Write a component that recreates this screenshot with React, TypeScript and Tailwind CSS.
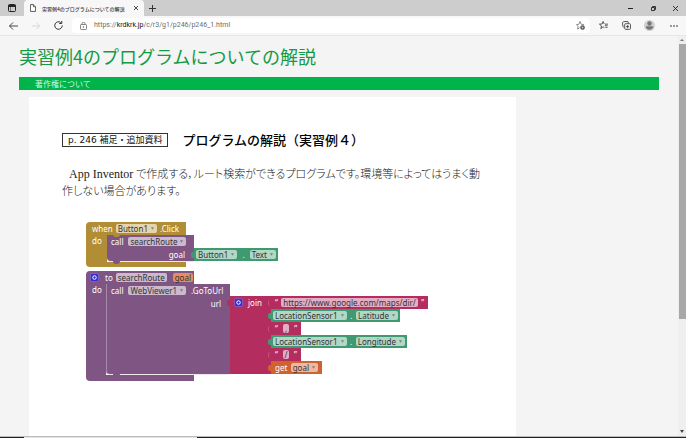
import type { ReactNode } from 'react';

const DOC_TITLE = '実習例4のプログラムについての解説';

/* ---------- browser chrome ---------- */

function TabBar() {
  return (
    <div className="flex h-4 items-stretch bg-[#cdcdcd] text-[#333]">
      <button aria-label="タブ操作メニュー" className="flex w-6 items-center justify-center">
        <svg viewBox="0 0 16 16" className="size-2" fill="none" stroke="#222" strokeWidth="2">
          <rect x="1" y="1" width="14" height="14" rx="2" />
          <path d="M1 4h14" strokeWidth="4" />
          <path d="M5 5v10" strokeWidth="1" />
        </svg>
      </button>
      <div className="flex w-30 items-center rounded-t-sm bg-[#f7f7f7] pr-1 pl-1.5">
        <svg viewBox="0 0 14 18" className="h-2 w-1.5" fill="#fff" stroke="#444" strokeWidth="2">
          <path d="M1 1h7l5 5v11H1z" />
          <path d="M8 1v5h5" />
        </svg>
        <span className="ml-1.5 flex-1 text-[5px] leading-none font-medium whitespace-nowrap">{DOC_TITLE}</span>
        <button aria-label="タブを閉じる" className="flex size-2 items-center justify-center">
          <svg viewBox="0 0 10 10" className="size-1" stroke="#222" strokeWidth="2">
            <path d="M0 0l10 10M10 0L0 10" />
          </svg>
        </button>
      </div>
      <button aria-label="新しいタブ" className="flex w-4 items-center justify-center">
        <svg viewBox="0 0 14 14" className="size-[7px]" stroke="#333" strokeWidth="2">
          <path d="M7 0v14M0 7h14" />
        </svg>
      </button>
      <div className="flex-1" />
      <button aria-label="最小化" className="flex w-[23px] items-center justify-center">
        <svg viewBox="0 0 10 10" className="size-[5px]" stroke="#222" strokeWidth="2">
          <path d="M0 5h10" />
        </svg>
      </button>
      <button aria-label="元に戻す" className="flex w-[23px] items-center justify-center">
        <svg viewBox="0 0 10 10" className="size-[5px]" fill="none" stroke="#222" strokeWidth="1.8">
          <path d="M1 3h6v6H1zM3 3V1h6v6H7" />
        </svg>
      </button>
      <button aria-label="閉じる" className="flex w-[21px] items-center justify-center">
        <svg viewBox="0 0 10 10" className="size-[5px]" stroke="#222" strokeWidth="1.8">
          <path d="M0 0l10 10M10 0L0 10" />
        </svg>
      </button>
    </div>
  );
}

function Toolbar() {
  return (
    <div className="flex h-5 items-center border-b border-[#e6e6e6] bg-[#f7f7f7]">
      <button aria-label="戻る" className="flex w-[27px] items-center justify-center">
        <svg viewBox="0 0 18 16" className="h-2 w-[9px]" fill="none" stroke="#333" strokeWidth="1.8">
          <path d="M18 8H1M8 1L1 8l7 7" />
        </svg>
      </button>
      <button aria-label="進む" disabled className="flex w-[18px] items-center justify-center">
        <svg viewBox="0 0 18 16" className="h-2 w-2" fill="none" stroke="#d0d0d0" strokeWidth="1.8">
          <path d="M0 8h17M10 1l7 7-7 7" />
        </svg>
      </button>
      <button aria-label="更新" className="flex w-[27px] items-center justify-center">
        <svg viewBox="0 0 18 18" className="size-[9px]" fill="none" stroke="#333" strokeWidth="2">
          <path d="M16.500 9A7.500 7.500 0 1 1 13.500 3M15.500 0v5h-5" />
        </svg>
      </button>
      <div className="flex h-[15px] flex-1 items-center rounded-sm bg-white">
        <svg viewBox="0 0 14 16" className="ml-2 h-2 w-[7px]" fill="none" stroke="#666" strokeWidth="1.600">
          <rect x="1" y="5" width="12" height="10" rx="1.5" />
          <path d="M4 5V3.500a3 3 0 0 1 6 0V5" />
          <circle cx="7" cy="10" r="0.8" fill="#666" />
        </svg>
        <div className="ml-[7px] flex-1 font-[Roboto,sans-serif] text-[7px] leading-none text-[#6c6c6c]">
          https://<span className="text-[#111]">krdkrk.jp</span>/c/r3/g1/p246/p246_1.html
        </div>
        <button aria-label="お気に入りに追加" className="mr-[5px]">
          <svg viewBox="0 0 20 20" className="size-[9px]" fill="none" stroke="#666" strokeWidth="1.600">
            <path d="M8 15l-4.500 3 1.200-6L1 8l5.500-.8L9 1l2.500 6.200L18 8" />
            <circle cx="14.500" cy="14.500" r="4.500" fill="#555" />
            <path d="M12 14.500h5M14.500 12v5" stroke="#fff" strokeWidth="1" />
          </svg>
        </button>
      </div>
      <button aria-label="お気に入り" className="flex w-[26px] items-center justify-center">
        <svg viewBox="0 0 20 20" className="size-[9px]" fill="none" stroke="#333" strokeWidth="1.800">
          <path d="M12 15l-3-2-5 4 1.500-6L1 7l6-.5L9 1l2.500 5.500M13 7h7M13 10.500h6M14 14h5" />
        </svg>
      </button>
      <button aria-label="コレクション" className="flex w-[20px] items-center justify-center">
        <svg viewBox="0 0 20 20" className="size-[9px]" fill="none" stroke="#333" strokeWidth="1.800">
          <path d="M4 14l-2-1.500L1 4l2-2.500L13 1l1.500 4" />
          <rect x="6" y="6" width="13" height="12.500" rx="2" />
          <path d="M12.500 9v7M9 12.500h7" />
        </svg>
      </button>
      <button aria-label="プロファイル" className="flex w-[26px] items-center justify-center">
        <svg viewBox="0 0 22 22" className="size-[11px]">
          <circle cx="11" cy="11" r="11" fill="#d2d0ce" />
          <circle cx="11" cy="7" r="4.500" fill="#777" />
          <path d="M3.500 12.500h15c0 4-3 7-7.500 7s-7.500-3-7.500-7z" fill="#777" />
        </svg>
      </button>
      <button aria-label="設定など" className="flex w-[24px] justify-center">
        <svg viewBox="0 0 16 4" className="h-[2px] w-2" fill="#222">
          <circle cx="2" cy="2" r="1.600" />
          <circle cx="8" cy="2" r="1.600" />
          <circle cx="14" cy="2" r="1.600" />
        </svg>
      </button>
    </div>
  );
}

/* ---------- program blocks ---------- */

function Chip({ tone, menu = true, children }: { tone: string; menu?: boolean; children: ReactNode }) {
  return (
    <span className={`flex h-[9px] items-center rounded-xs px-[2px] text-[#333] ${tone}`}>
      {children}
      {menu && (
        <svg viewBox="0 0 6 5" className="mr-px ml-[3px] h-[3px] w-[3px] opacity-50" fill="currentColor">
          <path d="M0 0h6L3 5z" />
        </svg>
      )}
    </span>
  );
}

function Plug({ tone }: { tone: string }) {
  return <i className={`absolute top-1 -left-[3px] h-[6px] w-1 rounded-l-xs ${tone}`} />;
}

function Gear() {
  return (
    <svg viewBox="0 0 18 18" className="size-[9px] shrink-0">
      <rect x="1" y="1" width="16" height="16" rx="3" fill="#3d2ad0" stroke="#8d83e8" />
      <circle cx="9" cy="9" r="3.500" fill="none" stroke="#fff" strokeWidth="2" />
    </svg>
  );
}

function Property({ component, property, width }: { component: string; property: string; width: string }) {
  return (
    <div className={`relative flex h-[13px] items-center justify-between bg-[#3f9a71] px-[2px] ${width}`}>
      <Plug tone="bg-[#3f9a71]" />
      <Chip tone="bg-[#b2d7c6]">{component}</Chip>
      <span>.</span>
      <Chip tone="bg-[#b2d7c6]">{property}</Chip>
    </div>
  );
}

function TextBlock({ value, width }: { value: string; width: string }) {
  return (
    <div className={`relative flex h-[13px] items-center justify-between bg-[#b32d5e] px-1 ${width}`}>
      <i className="absolute top-1 -left-[3px] h-[6px] w-1 rounded-l-xs border-l border-[#c5517a]" />
      <span>“</span>
      <Chip tone="bg-[#e3aec4]" menu={false}>{value}</Chip>
      <span>”</span>
    </div>
  );
}

function Workspace() {
  return (
    <div className="flex flex-col items-start gap-1 font-['Noto_Sans'] text-[8px] leading-none text-white">
      <div>
        <div className="flex h-[13px] w-[100px] items-center gap-[3px] rounded-tl-sm bg-[#b18e35] pl-1.5">
          when
          <Chip tone="bg-[#e4d5ae]">Button1</Chip>
          .Click
        </div>
        <div className="flex">
          <div className="w-[21px] bg-[#b18e35] pt-[2px] pl-1.5">do</div>
          <div className="relative w-[87px] rounded-bl-sm border-b border-[#efe6f0] bg-[#7f5583]">
            <i className="absolute -top-px left-1.5 h-[3px] w-[7px] rounded-b-sm bg-[#b18e35]" />
            <i className="absolute -bottom-[3px] left-1.5 h-[3px] w-[7px] rounded-b-sm bg-[#7f5583]" />
            <div className="flex h-[13px] items-center gap-[5px] pl-1">
              call <Chip tone="bg-[#cbb9cd]">searchRoute</Chip>
            </div>
            <div className="flex h-[13px] items-center justify-end pr-[9px]">goal</div>
          </div>
          <div className="mb-px self-end">
            <Property component="Button1" property="Text" width="w-[84px]" />
          </div>
        </div>
        <div className="h-[5px] w-[100px] rounded-bl-sm bg-[#b18e35]" />
      </div>

      <div>
        <div className="flex h-[13px] w-[108px] items-center rounded-tl-sm bg-[#7f5583] pl-1">
          <Gear />
          <span className="mr-[3px] ml-1.5">to</span>
          <Chip tone="bg-[#cbb9cd]" menu={false}>searchRoute</Chip>
          <span className="ml-1.5">
            <Chip tone="bg-[#e58d60]" menu={false}>goal</Chip>
          </span>
        </div>
        <div className="flex">
          <div className="w-5 bg-[#7f5583] pt-[2px] pl-1.5">do</div>
          <div className="relative w-[124px] rounded-bl-sm border-b border-l border-b-[#efe6f0] border-l-[#a88bab] bg-[#7f5583]">
            <i className="absolute -bottom-[3px] left-1.5 h-[3px] w-[7px] rounded-b-sm bg-[#7f5583]" />
            <div className="flex h-[13px] items-center gap-[5px] pl-1">
              call <Chip tone="bg-[#cbb9cd]">WebViewer1</Chip>
              <span>.GoToUrl</span>
            </div>
            <div className="flex h-[13px] items-center justify-end pr-[9px]">url</div>
          </div>
          <div className="relative mt-3 mb-px w-[41px] bg-[#b32d5e] pl-1">
            <Plug tone="bg-[#b32d5e]" />
            <div className="flex h-[13px] items-center gap-[5px]">
              <Gear />
              join
            </div>
          </div>
          <div className="mt-3 mb-px flex flex-col items-start">
            <TextBlock value="https://www.google.com/maps/dir/" width="w-[157px]" />
            <Property component="LocationSensor1" property="Latitude" width="w-[129px]" />
            <TextBlock value="," width="w-[30px]" />
            <Property component="LocationSensor1" property="Longitude" width="w-[136px]" />
            <TextBlock value="/" width="w-[30px]" />
            <div className="relative flex h-[13px] w-[51px] items-center justify-between bg-[#d0622f] px-1">
              <Plug tone="bg-[#d0622f]" />
              get <Chip tone="bg-[#edb9a3]">goal</Chip>
            </div>
          </div>
        </div>
        <div className="h-[6px] w-[108px] rounded-bl-sm bg-[#7f5583]" />
      </div>
    </div>
  );
}

/* ---------- page ---------- */

function Article() {
  return (
    <article className="mt-[7px] ml-[10px] w-[487px] max-w-full flex-1 bg-white px-[33px] pt-[33px]">
      <div className="flex items-center gap-[14px]">
        <span className="border border-[#333] px-[5px] font-['DejaVu_Sans','Noto_Sans_CJK_JP',sans-serif] text-[9px] leading-3 whitespace-nowrap text-[#111]">
          p. 246 補足・追加資料
        </span>
        <h2 className="text-[13px] leading-5 font-medium whitespace-nowrap text-black">プログラムの解説（実習例４）</h2>
      </div>
      <p className="mt-4 font-['Liberation_Serif','Noto_Sans_CJK_JP',serif] text-[11px] leading-[17px] font-light text-[#222] [font-feature-settings:'palt']">
        <span className="ml-[7px] text-[12px]">App Inventor</span> で作成する，ルート検索ができるプログラムです。環境等によってはうまく動
        <br />
        作しない場合があります。
      </p>
      <div className="mt-[22px] ml-6">
        <Workspace />
      </div>
    </article>
  );
}

function Scrollbar() {
  return (
    <div className="flex w-2 flex-col items-center bg-[#efefef] pt-[3px] pb-[3px]">
      <svg viewBox="0 0 8 4" className="mb-[3px] h-[2px] w-1" fill="#777">
        <path d="M4 0l4 4H0z" />
      </svg>
      <div className="w-[7px] flex-[276] bg-[#a8a8a8]" />
      <div className="flex-[112]" />
      <svg viewBox="0 0 8 6" className="h-[3px] w-1" fill="#444">
        <path d="M0 0h8L4 6z" />
      </svg>
    </div>
  );
}

export default function App() {
  return (
    <div className="flex min-h-screen flex-col bg-[#f4f4f4] font-['Noto_Sans_CJK_JP',sans-serif]">
      <header>
        <TabBar />
        <Toolbar />
      </header>
      <div className="flex flex-1">
        <main className="flex min-w-0 flex-1 flex-col pr-[19px] pl-[19px]">
          <h1 className="mt-[7px] text-[18px] leading-[27px] text-[#129a45]">{DOC_TITLE}</h1>
          <nav className="mt-[7px] flex h-[13px] items-center bg-[#00b34a] pl-4 text-[8px] leading-none">
            <a href="#copyright" className="text-[#d5f7df]">著作権について</a>
          </nav>
          <Article />
        </main>
        <Scrollbar />
      </div>
      <footer className="flex h-[2px] border-t border-[#bbb] bg-[#222]">
        <div className="ml-6 w-[173px] bg-[#e2e2e2]" />
      </footer>
    </div>
  );
}
